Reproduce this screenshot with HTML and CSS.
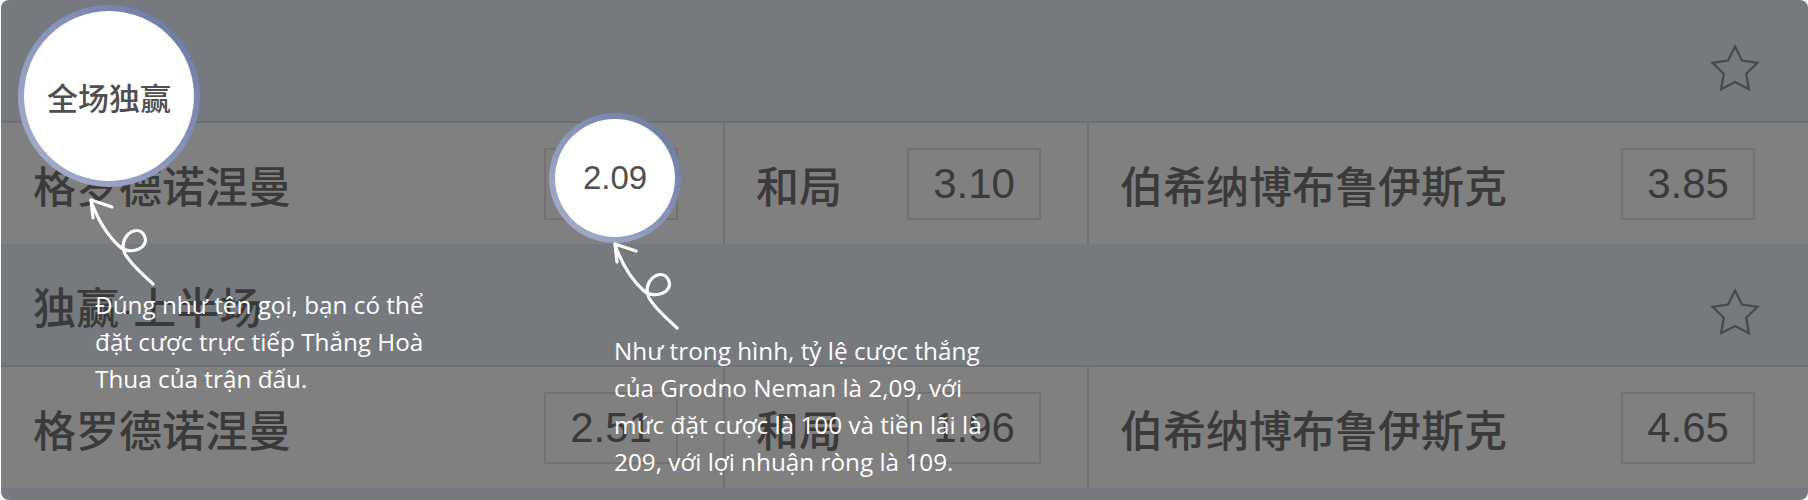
FILE: index.html
```html
<!DOCTYPE html>
<html lang="zh">
<head>
  <meta charset="UTF-8" />
  <meta name="viewport" content="width=device-width, initial-scale=1.0"/>
  <title>全场独赢 - 玩法说明</title>
  <link rel="stylesheet" href="styles.css">
</head>
<body>

  <div class="board">

    <div class="market">
      <div class="market-head">
        <span class="market-title"></span>
        <svg class="star" viewBox="0 0 24 24"><polygon points="12,2 15.09,8.26 22,9.27 17,14.14 18.18,21.02 12,17.77 5.82,21.02 7,14.14 2,9.27 8.91,8.26"/></svg>
      </div>
      <div class="odds-row">
        <div class="cell"><span class="team">格罗德诺涅曼</span><span class="odd">2.09</span></div>
        <div class="cell"><span class="team">和局</span><span class="odd">3.10</span></div>
        <div class="cell"><span class="team">伯希纳博布鲁伊斯克</span><span class="odd">3.85</span></div>
      </div>
    </div>

    <div class="market">
      <div class="market-head">
        <span class="market-title">独赢-上半场</span>
        <svg class="star" viewBox="0 0 24 24"><polygon points="12,2 15.09,8.26 22,9.27 17,14.14 18.18,21.02 12,17.77 5.82,21.02 7,14.14 2,9.27 8.91,8.26"/></svg>
      </div>
      <div class="odds-row">
        <div class="cell"><span class="team">格罗德诺涅曼</span><span class="odd">2.51</span></div>
        <div class="cell"><span class="team">和局</span><span class="odd">1.96</span></div>
        <div class="cell"><span class="team">伯希纳博布鲁伊斯克</span><span class="odd">4.65</span></div>
      </div>
    </div>

    <div class="market-next"></div>

    <!-- guide overlay -->
    <div class="spot spot-title">全场独赢</div>
    <div class="spot spot-odd">2.09</div>

    <svg class="arrows" width="1808" height="500" viewBox="0 0 1808 500">
      <g id="arrow">
        <path d="M91 201 C98 220 107 235 119 246 C131 257 151 247 144 235 C137 223 117 237 125 254 C132 266 143 274 153 284"/>
        <path d="M112 207 L91 200 L93 218"/>
      </g>
      <use href="#arrow" transform="translate(524 44)"/>
    </svg>

    <p class="note note-left">Đúng như tên gọi, bạn có thể<br>đặt cược trực tiếp Thắng Hoà<br>Thua của trận đấu.</p>
    <p class="note note-right">Như trong hình, tỷ lệ cược thắng<br>của Grodno Neman là 2,09, với<br>mức đặt cược là 100 và tiền lãi là<br>209, với lợi nhuận ròng là 109.</p>

  </div>

</body>
</html>
```

FILE: styles.css
```css
body {
  margin: 0;
  background: #fff;
  font-family: "Liberation Sans", "Noto Sans CJK SC", sans-serif;
}
.board {
  position: relative;
  width: 1807px;
  height: 500px;
  margin-left: 1px;
  background: #76797e;
  border-radius: 8px;
  overflow: hidden;
  color: #3a3a3a;
}
.market-head {
  height: 121px;
  display: flex;
  align-items: center;
  justify-content: space-between;
  padding: 0 46px 0 32px;
  border-bottom: 2px solid #6e6f72;
  font-size: 43px;
  font-weight: 500;
}
.star {
  width: 54px;
  height: 54px;
  margin-top: 16px;
  fill: none;
  stroke: #48494b;
  stroke-width: 1;
}
.odds-row {
  display: grid;
  grid-template-columns: 722px 364px 1fr;
  height: 121px;
  background: #808080;
}
.cell {
  display: flex;
  align-items: center;
  justify-content: space-between;
  padding: 0 45px 0 31px;
  border-left: 2px solid #727272;
}
.cell:first-child {
  border-left: 0;
  padding-left: 32px;
}
.cell:nth-child(2) {
  padding-right: 46px;
}
.cell:last-child {
  padding-right: 53px;
}
.team {
  font-size: 43px;
  font-weight: 500;
}
.odd {
  width: 130px;
  height: 68px;
  border: 2px solid #727272;
  display: flex;
  align-items: center;
  justify-content: center;
  font-size: 42px;
}
.market-next {
  height: 12px;
}

.spot {
  position: absolute;
  display: flex;
  align-items: center;
  justify-content: center;
  border-radius: 50%;
  border: 6px solid transparent;
  background: linear-gradient(#fff, #fff) padding-box,
              linear-gradient(225deg, #67769f, #8e98bd 55%, #a9b1cc) border-box;
  color: #4f4f4f;
}
.spot-title {
  left: 17px;
  top: 5px;
  width: 170px;
  height: 170px;
  font-size: 31px;
  font-weight: 500;
  font-family: "Noto Sans CJK SC", sans-serif;
}
.spot-odd {
  left: 548px;
  top: 113px;
  width: 120px;
  height: 118px;
  font-size: 33px;
}
.arrows {
  position: absolute;
  left: -1px;
  top: 0;
  fill: none;
  stroke: #fff;
  stroke-width: 3.2;
  stroke-linecap: round;
  stroke-linejoin: round;
}
.note {
  position: absolute;
  margin: 0;
  color: #fff;
  font-family: "Open Sans", sans-serif;
  font-size: 24.3px;
  line-height: 37px;
  white-space: nowrap;
}
.note-left {
  left: 94px;
  top: 286px;
}
.note-right {
  left: 613px;
  top: 332px;
}
```
